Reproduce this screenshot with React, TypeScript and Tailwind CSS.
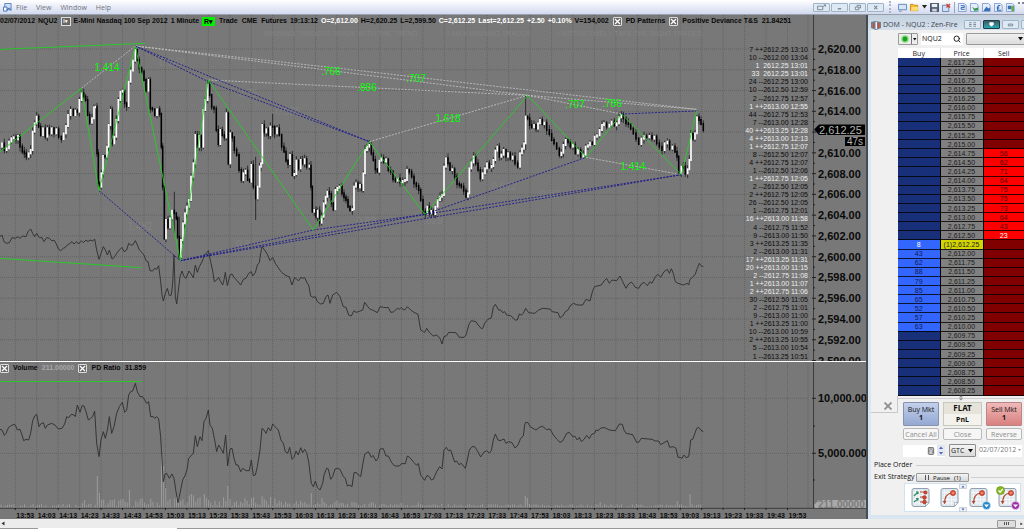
import type { ReactNode } from "react";
import { Search, Calculator } from "lucide-react";

/* Chart series are kept in thirds of a chart unit: "x:y x:y ..." */
const CLOSES = `0:440 6:430 13:450 20:445 27:425 34:415 41:412 48:418 54:408 60:440 67:455 73:460 79:470 86:460 92:450 98:395 104:370 110:350 116:380 122:405 129:385 136:410 142:385 148:400 155:385 162:400 169:388 176:410 184:417 191:400 198:378 204:345 212:330 220:345 226:332 232:335 238:300 245:280 251:290 257:300 263:345 269:368 276:355 282:322 287:320 291:460 295:550 299:560 304:520 309:468 315:470 321:440 326:375 332:330 337:430 343:410 349:360 355:300 361:275 368:272 374:310 380:318 386:245 392:212 399:182 406:150 412:180 418:205 425:215 432:240 438:272 446:240 451:325 457:328 464:345 471:328 479:342 484:440 488:560 493:715 498:660 504:682 510:655 516:632 523:640 529:655 533:710 538:770 543:720 549:670 555:640 561:620 567:600 573:530 580:490 586:405 592:440 598:408 604:440 610:330 616:300 623:255 629:285 635:322 642:326 649:390 655:432 661:390 667:405 673:412 679:340 685:490 691:400 697:412 703:450 710:465 717:510 724:540 730:520 737:512 743:540 749:545 754:495 760:560 767:595 773:560 779:500 783:490 787:375 793:397 799:388 805:405 811:380 818:380 824:400 831:385 838:405 845:440 852:455 858:482 864:492 870:465 877:525 883:522 889:482 896:505 902:480 908:490 914:478 920:500 928:497 933:560 937:635 943:630 948:650 953:632 959:668 965:650 971:610 977:590 982:575 988:582 994:610 1000:628 1006:570 1012:564 1018:560 1026:580 1032:592 1038:600 1044:620 1050:630 1057:628 1062:560 1068:550 1074:562 1080:555 1086:570 1090:520 1095:450 1101:440 1108:435 1114:460 1120:480 1126:508 1132:515 1138:482 1144:475 1151:485 1158:478 1165:510 1172:515 1179:538 1186:542 1193:536 1200:547 1208:543 1215:540 1221:510 1228:515 1235:530 1242:550 1249:558 1256:570 1262:600 1269:635 1276:642 1282:620 1288:640 1294:633 1300:642 1306:620 1313:600 1320:590 1326:585 1332:500 1338:475 1344:490 1350:510 1357:508 1364:530 1371:552 1378:555 1384:560 1391:572 1398:590 1404:580 1408:505 1414:487 1421:470 1427:490 1434:510 1441:535 1448:520 1455:505 1461:490 1468:502 1475:498 1480:480 1486:452 1492:440 1498:470 1504:464 1511:450 1518:470 1524:460 1531:476 1538:470 1545:490 1553:500 1560:460 1566:446 1572:430 1577:350 1583:355 1589:375 1595:382 1602:375 1608:386 1614:370 1620:360 1627:372 1633:368 1640:390 1648:402 1655:420 1662:430 1670:446 1678:465 1684:458 1690:435 1697:420 1704:427 1711:440 1719:434 1726:460 1734:450 1742:470 1750:464 1757:440 1764:436 1770:428 1777:432 1784:410 1791:406 1799:390 1806:375 1812:370 1820:380 1828:374 1835:365 1843:376 1850:370 1857:352 1864:345 1870:355 1878:370 1885:372 1892:386 1900:400 1908:416 1916:432 1924:416 1932:409 1940:412 1948:408 1956:416 1963:410 1970:430 1978:440 1986:450 1994:430 2002:425 2009:446 2017:440 2025:455 2031:470 2036:520 2044:500 2050:500 2056:520 2063:508 2068:480 2073:402 2079:416 2085:400 2091:352 2097:360 2103:372 2110:390`;

const DEVIANCE = `0:710 6:705 12:725 20:730 28:728 36:713 46:715 54:710 60:715 68:708 78:710 84:695 92:687 98:700 104:710 110:700 118:713 126:713 132:725 140:713 148:715 156:723 162:720 168:730 176:748 182:752 190:745 196:742 202:735 210:730 216:725 222:732 230:725 236:732 244:722 250:728 258:720 264:725 270:720 278:723 284:717 290:750 297:778 303:760 310:740 316:750 322:765 328:750 336:777 342:773 350:760 358:750 366:742 372:755 380:750 386:730 392:735 398:735 406:722 412:735 418:750 426:758 432:765 438:782 444:785 450:812 458:813 464:805 470:808 476:797 482:845 486:885 490:903 496:880 502:865 508:887 514:885 518:850 522:765 526:890 530:912 534:880 540:830 546:813 552:830 558:835 567:813 572:820 580:833 586:795 592:817 598:800 606:785 614:765 625:752 632:785 638:813 643:845 650:840 656:832 662:845 668:855 672:840 676:817 682:857 690:825 696:822 702:832 712:843 722:855 730:838 738:835 746:820 754:815 758:828 766:818 772:795 778:788 782:760 786:740 794:750 802:763 810:782 818:772 826:790 836:805 846:818 858:827 868:830 876:855 884:832 890:838 896:842 902:832 908:835 914:833 922:850 926:855 932:888 940:892 946:890 952:905 962:912 970:910 978:890 984:885 990:910 998:885 1010:877 1020:890 1030:920 1038:922 1046:945 1054:948 1062:932 1068:937 1076:935 1088:930 1094:907 1102:918 1110:928 1118:930 1132:938 1140:920 1150:922 1160:923 1165:922 1172:937 1180:936 1192:925 1198:928 1204:922 1210:930 1216:928 1222:920 1232:930 1242:937 1254:943 1262:990 1270:995 1274:997 1280:985 1288:997 1300:1008 1310:1005 1320:1015 1326:1032 1332:1010 1340:1007 1346:997 1368:998 1378:1012 1392:1012 1398:1005 1408:970 1414:962 1428:965 1432:972 1444:986 1448:985 1454:970 1460:962 1464:958 1474:953 1480:922 1486:913 1496:930 1502:930 1508:938 1514:935 1520:945 1532:947 1546:960 1552:960 1558:942 1564:945 1570:940 1577:925 1586:938 1604:940 1616:930 1628:925 1650:927 1656:935 1674:938 1680:953 1688:948 1696:935 1704:930 1710:918 1720:910 1732:915 1748:915 1758:898 1770:903 1778:872 1784:860 1804:855 1812:843 1820:835 1828:850 1836:840 1850:842 1860:828 1868:845 1878:865 1886:852 1894:846 1900:853 1906:862 1916:865 1924:852 1932:847 1942:857 1950:845 1956:850 1966:830 1974:823 1982:832 1992:815 2002:808 2008:820 2014:806 2020:820 2026:845 2034:850 2044:853 2050:855 2062:850 2066:855 2070:838 2078:832 2086:822 2092:805 2098:790 2104:798 2110:800`;

const RATIO = `0:1288 6:1290 13:1306 18:1300 26:1282 32:1278 42:1273 46:1275 52:1290 60:1288 66:1305 71:1322 78:1318 86:1320 92:1300 98:1262 104:1248 110:1243 117:1280 122:1272 130:1268 136:1285 142:1275 155:1270 165:1275 175:1287 186:1285 194:1272 200:1250 206:1253 214:1243 222:1245 226:1250 232:1215 240:1237 246:1217 252:1218 258:1235 265:1260 272:1255 278:1250 284:1233 290:1330 297:1370 303:1320 310:1295 316:1315 322:1290 328:1250 335:1300 342:1280 350:1240 358:1220 367:1207 374:1237 380:1230 386:1185 392:1175 398:1173 406:1150 412:1175 420:1190 428:1190 434:1200 440:1210 446:1205 452:1250 460:1250 464:1255 470:1250 476:1257 482:1310 486:1380 490:1445 495:1422 500:1420 508:1435 516:1422 522:1435 528:1475 534:1508 540:1480 548:1440 556:1425 562:1405 566:1375 580:1360 586:1307 592:1340 600:1310 606:1322 612:1265 618:1255 625:1230 630:1275 637:1285 643:1315 650:1355 656:1335 662:1345 670:1360 677:1305 683:1398 690:1347 696:1345 702:1375 708:1395 714:1395 722:1415 728:1405 738:1412 748:1412 754:1380 760:1427 766:1425 772:1400 780:1350 786:1285 792:1290 798:1300 805:1283 812:1293 818:1272 825:1280 835:1290 843:1320 850:1330 856:1355 863:1360 869:1342 876:1378 882:1372 888:1353 895:1365 902:1343 908:1358 914:1348 920:1358 926:1385 934:1450 940:1460 946:1443 952:1462 960:1470 968:1450 972:1425 980:1405 985:1407 992:1438 998:1430 1005:1407 1012:1405 1020:1408 1030:1430 1036:1435 1042:1458 1050:1455 1056:1460 1062:1418 1070:1418 1075:1425 1082:1430 1088:1395 1094:1363 1105:1355 1114:1372 1119:1366 1128:1383 1134:1375 1140:1347 1150:1346 1158:1368 1165:1368 1175:1388 1184:1398 1198:1398 1204:1391 1216:1391 1222:1368 1230:1373 1242:1388 1250:1396 1255:1390 1262:1425 1274:1441 1281:1426 1288:1430 1294:1440 1300:1438 1310:1415 1319:1400 1326:1407 1332:1350 1339:1342 1345:1352 1352:1350 1364:1386 1370:1383 1377:1394 1384:1390 1396:1405 1402:1380 1408:1350 1416:1340 1424:1340 1432:1352 1442:1371 1452:1356 1460:1352 1468:1359 1474:1352 1480:1320 1486:1302 1494:1320 1500:1322 1512:1317 1518:1330 1526:1325 1536:1328 1545:1344 1554:1335 1562:1315 1570:1308 1574:1275 1577:1267 1584:1268 1590:1280 1608:1290 1618:1282 1628:1279 1640:1289 1650:1287 1660:1305 1670:1317 1680:1327 1688:1323 1700:1300 1708:1297 1718:1310 1724:1308 1732:1320 1738:1312 1744:1325 1752:1318 1760:1306 1768:1316 1775:1303 1784:1300 1788:1290 1795:1292 1802:1284 1814:1283 1828:1290 1846:1292 1858:1272 1867:1273 1872:1290 1878:1300 1898:1304 1910:1327 1916:1327 1924:1315 1956:1318 1966:1323 1976:1323 1982:1334 2002:1322 2009:1342 2020:1340 2028:1345 2034:1372 2040:1372 2046:1375 2052:1365 2058:1373 2066:1370 2070:1340 2072:1320 2078:1318 2084:1302 2090:1285 2096:1282 2102:1290 2110:1295`;

type Pt = [number, number];
const parse = (s: string): Pt[] =>
  s.split(" ").map((p) => {
    const [x, y] = p.split(":");
    return [Number(x) / 3, Number(y) / 3];
  });
const toPoints = (pts: Pt[]) => pts.map((p) => p.join(",")).join(" ");
const noise = (i: number) => {
  const v = Math.sin(i * 12.9898) * 43758.5453;
  return v - Math.floor(v);
};

const closes = parse(CLOSES);
const WICKS: Record<number, [number, number]> = { 1577: [286, 450], 767: [470, 660], 523: [575, 700], 406: [140, 190], 538: [650, 780], 623: [240, 310], 818: [342, 410] };
const candles = closes.slice(1).map(([x, y], i) => {
  const open = closes[i][1];
  const top = Math.min(open, y) - 1;
  const bottom = Math.max(open, y) + 1;
  const wick = WICKS[Math.round(x * 3)];
  return {
    x,
    up: y < open,
    top,
    bottom,
    high: wick ? wick[0] / 3 : top - noise(i) * 4,
    low: wick ? wick[1] / 3 : bottom + noise(i + 500) * 4,
  };
});

const SPIKES: Record<number, number> = { 15: 4, 39: 8, 45: 32, 46: 15, 60: 18, 75: 60, 76: 42, 77: 20, 89: 14, 95: 14, 106: 22, 122: 12, 145: 15, 150: 10, 245: 12, 246: 10, 280: 6, 316: 7, 322: 14 };
const volumes = Array.from({ length: 328 }, (_, i) => {
  const base = i < 38 ? 3 : i < 45 ? 4 : i < 78 ? 9 : i < 95 ? 12 : i < 132 ? 10 : i < 160 ? 7 : i < 200 ? 5 : 3;
  return { x: i * 2.14 + 1, h: SPIKES[i] ?? 1 + noise(i + 90) * base };
});

const prices = Array.from({ length: 16 }, (_, i) => ({ y: 49 + i * 20.77, label: `2,${620 - i * 2}.00` }));
const times = Array.from({ length: 37 }, (_, i) => {
  const m = 13 * 60 + 53 + i * 10;
  return { x: 15.3 + i * 21.45, label: `${Math.floor(m / 60)}:${String(m % 60).padStart(2, "0")}` };
});

const SWINGS = "0,455 244,265 297,572 406,138 541,782 625,240 940,690 1108,425 1275,643 1583,286 1758,472 1865,342 2044,524 2090,333";
const RATIO_LINES = ["244,265 406,138", "406,138 1000,203 2090,328", "406,138 1583,286", "625,240 1583,286", "1108,425 1583,286", "1583,286 1865,342", "1583,286 2090,328", "1758,472 2044,524"];
const TREND_LINES = ["406,138 1108,425", "406,138 625,245 1108,425", "297,572 541,782", "541,782 940,690 1275,643 1758,472", "541,782 1275,643 2044,524", "541,782 2044,524", "1865,342 2090,333"];
const GREEN_LABELS: [string, number, number][] = [["1.414", 107, 71], [".766", 331, 75], [".886", 367, 91], [".707", 416, 82], ["1.618", 448, 122], [".707", 575, 108], [".786", 612, 107], ["1.414", 633, 170]];
const FAINT_LABELS: [string, number, number][] = [["0.642", 172, 66], ["0.75", 248, 97], ["0.586", 288, 115], ["1.482", 140, 230], ["0.8", 243, 248], ["0.512", 504, 190], ["0.97", 550, 198], ["0.82", 366, 225], [".829", 433, 224]];

function GridLines({ top, bottom, ys }: { top: number; bottom: number; ys: number[] }) {
  return (
    <g stroke="#636363" strokeDasharray="1 1">
      {times.map((t) => (
        <line key={t.label} x1={t.x} x2={t.x} y1={top} y2={bottom} />
      ))}
      <line x1="808" x2="808" y1={top} y2={bottom} />
      {ys.map((y) => (
        <line key={y} x1="0" x2="808" y1={y} y2={y} />
      ))}
    </g>
  );
}

function PriceChart() {
  return (
    <svg viewBox="0 15 866 346" className="block w-full" role="img" aria-label="NQU2 price">
      <GridLines top={15} bottom={361} ys={prices.map((p) => p.y)} />
      <g fill="#838383" fontFamily="Liberation Sans, sans-serif" fontSize="7">
        <text x="264" y="36">WINNING TRADERS TRADE WITH THE TREND</text>
        <text x="447" y="36">I AM A WINNING TRADER</text>
        <text x="557" y="36">I INSTINCTIVELY TAKE THE RIGHT TRADES</text>
      </g>
      <g fill="#828282" fontFamily="Liberation Sans, sans-serif" fontSize="10" textAnchor="middle">
        {FAINT_LABELS.map(([t, x, y]) => (
          <text key={t + x} x={x} y={y}>{t}</text>
        ))}
      </g>
      <polyline points={toPoints(parse(DEVIANCE))} fill="none" stroke="#2e2e2e" strokeWidth="0.9" />
      {candles.map((c) => (
        <line key={c.x} x1={c.x} x2={c.x} y1={c.high} y2={c.low} stroke="#0c0c0c" strokeWidth="0.7" />
      ))}
      {candles.map((c) => (
        <rect key={c.x} x={c.x - (c.up ? 0.85 : 0.75)} y={c.top} width={c.up ? 1.7 : 1.5} height={c.bottom - c.top} fill={c.up ? "#fff" : "#000"} />
      ))}
      <g transform="scale(0.33333)" fill="none" strokeWidth="2.4">
        <g stroke="#c6c6c6" strokeDasharray="6 4">
          {RATIO_LINES.map((p) => <polyline key={p} points={p} />)}
        </g>
        <g stroke="#1c1c8c" strokeDasharray="6 4" strokeWidth="2.8">
          {TREND_LINES.map((p) => <polyline key={p} points={p} />)}
        </g>
        <g stroke="#1fd41f" strokeWidth="2.6">
          <polyline points={SWINGS} />
          <polyline points="0,148 435,130" />
          <polyline points="0,775 425,803" />
        </g>
      </g>
      <g fill="#00ff00" fontFamily="Liberation Sans, sans-serif" fontSize="10" textAnchor="middle">
        {GREEN_LABELS.map(([t, x, y]) => (
          <text key={t + x} x={x} y={y}>{t}</text>
        ))}
      </g>
      <line x1="813.5" x2="813.5" y1="15" y2="361" stroke="#3c3c3c" />
      <g fill="#0a0a0a" fontFamily="Liberation Sans, sans-serif" fontSize="11" fontWeight="700">
        {prices.map((p, i) => (
          <g key={p.label}>
            <path d={`M812 ${p.y}h4M813 ${p.y + 10.4}h2`} stroke="#222" />
            {i !== 4 && <text x="818" y={p.y + 4}>{p.label}</text>}
          </g>
        ))}
      </g>
      <path d="M814 129.500l5-5h46v10.500h-46z" fill="#000" />
      <rect x="845" y="137" width="20" height="9" fill="#000" />
      <g fill="#b4b4b4" fontFamily="Liberation Sans, sans-serif">
        <text x="819" y="133.500" fontSize="11">2,612.25</text>
        <text x="847" y="145" fontSize="10">47s</text>
      </g>
    </svg>
  );
}

function VolumeChart() {
  return (
    <svg viewBox="0 362 866 157" className="block w-full" role="img" aria-label="Volume and PD ratio">
      <GridLines top={363} bottom={508} ys={[398.3, 453.3]} />
      {volumes.map((v) => (
        <line key={v.x} x1={v.x} x2={v.x} y1={508 - v.h} y2="508" stroke="#9b9b9b" strokeWidth="1" />
      ))}
      <polyline points={toPoints(parse(RATIO))} fill="none" stroke="#2e2e2e" strokeWidth="0.9" />
      <path d="M0 381.500h141.500" stroke="#1fd41f" strokeWidth="0.9" />
      <path d="M0 508.300h866M813.500 362v147" stroke="#3c3c3c" />
      <path d="M812 398.300h4M812 453.300h4M813 426h2M813 480h2" stroke="#222" />
      <g fill="#0a0a0a" fontFamily="Liberation Sans, sans-serif" fontWeight="700">
        {times.map((t) => (
          <g key={t.label}>
            <path d={`M${t.x} 508v2`} stroke="#222" />
            <text x={t.x + 1} y="517.500" fontSize="7">{t.label}</text>
          </g>
        ))}
        <text x="818" y="402.300" fontSize="11">10,000.00</text>
        <text x="818" y="457.300" fontSize="11">5,000.000</text>
      </g>
      <path d="M814 505l5-5h47v8h-51z" fill="#a9a9a9" />
      <text x="818" y="508" fontSize="10" fontWeight="700" fontFamily="Liberation Sans, sans-serif" fill="#7c7c7c">211.00000</text>
    </svg>
  );
}

const DARK = "text-[#0a0a0a]";
const LIGHT = "text-white";

function CloseBox({ label }: { label: string }) {
  return (
    <button aria-label={label} className="flex size-[9px] shrink-0 items-center justify-center rounded-[1px] border border-[#ddd] bg-[#666]">
      <svg viewBox="0 0 7 7" className="size-[7px]"><path d="M1 1l5 5M6 1l-5 5" stroke="#fff" strokeWidth="1.3" /></svg>
    </button>
  );
}

const TAPE = `7 ++2612.25 13:10|10 --2612.00 13:04|*1  2612.25 13:01|*33  2612.25 13:01|24 --2612.25 13:00|10 --2612.50 12:59|2 --2612.75 12:57|*1 ++2613.00 12:55|44 --2612.75 12:53|7 --2613.00 12:28|*40 ++2613.25 12:28|*4 ++2613.00 12:13|*1 ++2612.75 12:07|8 --2612.50 12:07|4 ++2612.75 12:07|1 --2612.50 12:06|*1 ++2612.75 12:05|2 --2612.50 12:05|2 ++2612.75 12:05|26 --2612.50 12:05|1 --2612.75 12:01|*16 ++2613.00 11:58|4 --2612.75 11:52|9 --2613.00 11:50|3 ++2613.25 11:35|2 --2613.00 11:31|*17 ++2613.25 11:31|*20 ++2613.00 11:15|*2 --2612.75 11:08|*1 ++2613.00 11:07|*2 ++2612.75 11:06|30 --2612.50 11:05|2 --2612.75 11:01|9 --2613.00 11:00|1 ++2613.25 11:00|10 --2613.00 10:59|2 ++2613.25 10:55|5 --2613.00 10:54|1 --2613.25 10:51`.split("|");

function Charts() {
  return (
    <main className="min-w-0 flex-1 overflow-hidden bg-[#787878] font-['Liberation_Sans',sans-serif]">
      <section className="relative">
        <PriceChart />
        <header className="absolute inset-x-0 top-0 flex h-3 items-center gap-1 overflow-hidden text-[7px] font-bold whitespace-nowrap">
          <div className="flex items-center gap-[3px]">
            <span className={DARK}>02/07/2012</span>
            <span className={DARK}>NQU2</span>
            <button aria-label="Instrument" className="flex h-[9px] w-[10px] items-center justify-center border border-[#ddd] bg-[#666] text-[5px] leading-none text-white">I▾</button>
            <span className={DARK}>E-Mini Nasdaq 100 Sep 2012</span>
            <span className={DARK}>1 Minute</span>
            <button className="flex h-[9px] w-[13px] items-center justify-center bg-[#00f000] leading-none text-black">R▾</button>
          </div>
          <span className={DARK}>Trade</span>
          <span className={DARK}>CME</span>
          <div className="flex items-center gap-[3px]">
            <span className={DARK}>Futures</span>
            <span className={DARK}>19:13:12</span>
            <span className={LIGHT}>O=2,612.00</span>
            <span className={DARK}>H=2,620.25</span>
            <span className={DARK}>L=2,599.50</span>
            <span className={LIGHT}>C=2,612.25</span>
            <span className={LIGHT}>Last=2,612.25</span>
            <span className={LIGHT}>+2.50</span>
            <span className={LIGHT}>+0.10%</span>
            <span className={DARK}>V=154,002</span>
          </div>
          <CloseBox label="Remove PD Patterns" />
          <span className={DARK}>PD Patterns</span>
          <CloseBox label="Remove Positive Deviance" />
          <span className={DARK}>Positive Deviance T&amp;S</span>
          <span className={DARK}>21.84251</span>
        </header>
        <ol className="absolute top-[9%] right-[58px] bottom-0 flex flex-col justify-between text-right text-[7px] leading-[8px] whitespace-pre">
          {TAPE.map((t, i) => (
            <li key={i} className={t[0] === "*" ? "text-[#eee]" : "text-[#0c0c0c]"}>{t.replace("*", "")}</li>
          ))}
        </ol>
      </section>
      <section className="relative border-t border-white">
        <VolumeChart />
        <header className="absolute inset-x-0 top-0 flex h-3 items-center gap-1 text-[7px] font-bold whitespace-nowrap">
          <CloseBox label="Remove Volume" />
          <span className={DARK}>Volume</span>
          <span className="text-[#a8a8a8]">211.00000</span>
          <CloseBox label="Remove PD Ratio" />
          <span className={DARK}>PD Ratio</span>
          <span className={DARK}>31.859</span>
        </header>
      </section>
    </main>
  );
}

function WinButton({ label, children, active }: { label: string; children: ReactNode; active?: boolean }) {
  return (
    <button
      aria-label={label}
      className={`flex h-[9px] w-[17px] shrink-0 items-center justify-center rounded-[1px] border ${active ? "border-[#1e3c46] bg-linear-to-b from-[#3c5a66] to-[#1fa9b0]" : "border-[#9fb4c6] bg-[#dfe9f3]"}`}
    >
      <svg viewBox="0 0 12 8" className="h-[7px] w-[11px]" fill="none" stroke={active ? "#fff" : "#71808e"}>{children}</svg>
    </button>
  );
}

function ToolIcon({ label, children }: { label: string; children: ReactNode }) {
  return (
    <button aria-label={label} className="size-[9px] shrink-0">
      <svg viewBox="0 0 10 10" className="size-[9px]">{children}</svg>
    </button>
  );
}

const SHEET = <path d="M.5 .5h6.500l2 2v7h-8.500z" fill="#e6effb" stroke="#7d9bd0" />;

function TopBar() {
  return (
    <header className="flex h-[15px] items-center overflow-hidden border-b border-[#98a0b0] bg-linear-to-b from-white via-[#e8ecf8] to-[#d3daee] font-['Open_Sans',sans-serif]">
      <div className="flex min-w-0 flex-1 items-center pl-[3px]">
        <svg viewBox="0 0 10 10" className="size-[9px]">
          <path d="M2 .5h7v7h-7z" fill="#cfe0f6" stroke="#4e7cbc" />
          <path d="M.5 4.500h4v4.500h-4z" fill="#fff" stroke="#3569b5" />
          <path d="M4 7.500l3-2 2 3" fill="none" stroke="#2e67b0" />
        </svg>
        <nav className="flex gap-[9px] pl-1 text-[7px] leading-none text-[#6d717a]">
          <button>File</button>
          <button>View</button>
          <button>Window</button>
          <button>Help</button>
        </nav>
      </div>
      <div className="flex w-[211px] shrink-0 items-center gap-px">
        <WinButton label="Pop out"><path d="M1.500 2.500h6v4h-6zM8 3l2.500-2M8.500 1h2v2" /></WinButton>
        <WinButton label="Minimize"><path d="M4 5.500h4" strokeWidth="1.500" /></WinButton>
        <WinButton label="Restore"><path d="M3.500 3.500h4v3h-4zM5.500 3v-1.500h4v3h-2" /></WinButton>
        <WinButton label="Close"><path d="M4.500 2l3.500 4M8 2l-3.500 4" strokeWidth="1.300" /></WinButton>
        <span className="ml-1 h-3 border-l-2 border-dotted border-[#aab4cc]" />
        <div className="ml-1.5 flex items-center gap-[3px]">
          <ToolIcon label="New window"><path d="M.5 1.500h9v6h-9z" fill="#d5e6fa" stroke="#5b82b8" /><path d="M1 9h3" stroke="#5b82b8" /></ToolIcon>
          <ToolIcon label="Open"><path d="M.5 8.500v-7h3l1 1h4v6z" fill="#f4bf3a" stroke="#c98a12" /><path d="M2 4.500h7.500l-1 4h-7.500z" fill="#ffdc73" /></ToolIcon>
          <svg viewBox="0 0 5 4" className="w-[5px]"><path d="M0 0h5l-2.500 3.500z" fill="#222" /></svg>
          <ToolIcon label="Save"><path d="M.5 .5h9v9h-9z" fill="#5a6578" stroke="#414a59" /><path d="M2 1h6v3.500h-6z" fill="#e8eef6" /><path d="M2.500 6.500h5v3h-5z" fill="#cfd6e0" /></ToolIcon>
          <ToolIcon label="Close workspace"><path d="M.5 2.500h7v7h-7z" fill="#cfe0f6" stroke="#5b82b8" /><path d="M5 1l4 4M9 1l-4 4" stroke="#d0392b" strokeWidth="1.400" /></ToolIcon>
          <span className="h-[11px] w-px bg-[#98a4c0]" />
          <ToolIcon label="Account">{SHEET}<path d="M3 3h4v2h-3.500v2h4" fill="none" stroke="#275fb0" /></ToolIcon>
          <ToolIcon label="Chart">{SHEET}<path d="M2 4l3 2 4-1v3l-4 1z" fill="#389a47" /></ToolIcon>
          <ToolIcon label="Strategy">{SHEET}<path d="M2 8l3-4 2 2 2-1v4h-7z" fill="#3c6fb6" /></ToolIcon>
          <ToolIcon label="Currency">{SHEET}<path d="M7 3c-3-1-3 1-3 5h4M3 5.500h3" fill="none" stroke="#275fb0" strokeWidth="1.200" /></ToolIcon>
          <ToolIcon label="Report">{SHEET}<path d="M2 3h4v4h-4z" fill="#3c6fb6" /><path d="M6 3h3v6h-3z" fill="#61ad4b" /></ToolIcon>
          <span className="h-[9px] w-1.5 shrink-0 self-start border-t-2 border-dotted border-[#7d8798]" />
        </div>
      </div>
    </header>
  );
}

const BIDS = [8, 43, 62, 88, 79, 85, 65, 52, 57, 63];
const ASKS = [56, 62, 71, 64, 75, 75, 73, 64, 43, 23];

function Ladder() {
  return (
    <table className="h-[348px] w-full table-fixed border-collapse text-center text-[7px] leading-[7px]">
      <thead>
        <tr className="h-[10px] bg-white font-['Open_Sans',sans-serif] text-[#222]">
          <th className="w-[42px] p-0 font-normal">Buy</th>
          <th className="w-[43px] border-x border-[#ddd] p-0 font-normal">Price</th>
          <th className="p-0 font-normal">Sell</th>
        </tr>
      </thead>
      <tbody className="font-['Liberation_Sans',sans-serif]">
        {Array.from({ length: 37 }, (_, i) => {
          const price = 2617.25 - i * 0.25;
          const bid = BIDS[i - 20];
          const ask = ASKS[i - 10];
          const last = i === 20;
          return (
            <tr key={price} className="border-b border-black/80">
              <td className={`p-0 ${bid ? "bg-[#3366ff]" : "bg-[#18307a]"} ${last ? "text-white" : "text-[#0c1c50]"}`}>{bid}</td>
              <td className={`border-x border-black p-0 ${last ? "bg-[#d4d400] text-[#222]" : "bg-[#808080] text-[#1c1c1c]"}`}>
                {last ? "(1)" : ""}2,{(price - 2000).toFixed(2)}
              </td>
              <td className={`p-0 ${ask ? "bg-[#ff0000]" : "bg-[#800000]"} ${i === 19 ? "text-white" : "text-[#5a0000]"}`}>{ask}</td>
            </tr>
          );
        })}
      </tbody>
    </table>
  );
}

function StrategyIcon({ label, badge, check, multi }: { label: string; badge?: string; check?: boolean; multi?: boolean }) {
  return (
    <button aria-label={label} className="size-[24px] shrink-0">
      <svg viewBox="0 0 24 24" className="size-[24px]">
        <path d="M5 2.500h13q2 0 2 2v12l-3.500 4h-11.500q-2 0-2-2v-14q0-2 2-2z" fill="#dfe6ec" stroke="#8fa0ae" />
        <path d="M6.500 4v15M10 4v15M13.500 4v15M17 4v13M4 6.500h15M4 10h15M4 13.500h15M4 17h13" stroke="#f7fafc" strokeWidth="0.800" />
        <path d="M20 16.500h-3.500v4z" fill="#fff" stroke="#8fa0ae" strokeWidth="0.700" />
        {multi ? (
          <g fill="none" strokeWidth="1.200">
            <path d="M5 10l4-4M7 6h2v2M5 16l4-3M7 12.500h2v2" stroke="#2f8f5a" />
            <path d="M11 6h5M11 11h3M11 16h3" stroke="#a8462f" />
            <g fill="#d4452f" stroke="#8d2a1b" strokeWidth="0.500"><circle cx="16.500" cy="6.500" r="1.700" /><circle cx="15.500" cy="11.500" r="1.900" /><circle cx="15.500" cy="16" r="1.900" /></g>
          </g>
        ) : (
          <g>
            <path d="M6.500 17.500c0-6 2-10 7.500-10.500" fill="none" stroke="#b1442e" strokeWidth="1.200" />
            <path d="M4.800 15l1.700 3 1.900-3z" fill="#b1442e" />
            <circle cx="15" cy="7" r="2.600" fill="#e0523a" stroke="#a12f1c" strokeWidth="0.600" />
            <path d="M13.800 7h2.400" stroke="#ffd9cf" strokeWidth="0.800" />
          </g>
        )}
        {badge && (
          <g>
            <circle cx="19.500" cy="19.500" r="4" fill={badge} stroke="#e9eef2" strokeWidth="0.600" />
            <path d="M17 18.500h5l-2.500 3z" fill="#fff" />
          </g>
        )}
        {check && (
          <g>
            <circle cx="4.500" cy="4.500" r="4" fill="#86b81f" stroke="#5d8a12" strokeWidth="0.600" />
            <path d="M2.500 4.500l1.600 1.700 2.700-3.400" fill="none" stroke="#fff" strokeWidth="1.300" />
          </g>
        )}
      </svg>
    </button>
  );
}

const SMALL_BUTTON = "h-3 rounded-[2px] border border-[#b9b9b9] bg-[#f6f6f6] text-[7px] leading-none whitespace-nowrap text-[#8d8d8d]";

function OrderPanel() {
  return (
    <aside className="flex w-[158px] shrink-0 flex-col overflow-hidden border-l-2 border-[#454b52] bg-[#d9e5f1] font-['Open_Sans',sans-serif] text-[7px] text-[#111]">
      <div className="flex h-[15px] shrink-0 items-center gap-0.5 bg-linear-to-b from-[#c3d1df] to-[#d5e0eb] pt-1 pl-[3px]">
        <svg viewBox="0 0 10 10" className="size-[10px] shrink-0">
          <path d="M0 2l4-1 6 1v6l-5 2-5-2z" fill="#6f7f8f" /><path d="M2 3h1.500v5h-1.500zM7 3h1.500v5h-1.500z" fill="#d24a35" /><path d="M4.500 2h1.500v7h-1.500z" fill="#f2f2f2" />
        </svg>
        <h2 className="w-[79px] shrink-0 leading-none whitespace-nowrap text-[#39434e]">DOM - NQU2 : Zen-Fire</h2>
        <WinButton label="Link windows"><path d="M2 2h3M7 2h3M2 4h3M7 4h3M2 6h3M7 6h3" /></WinButton>
        <WinButton label="Pin" active><path d="M4 2h4v2l-2 2-2-2z" fill="#fff" /></WinButton>
        <WinButton label="Minimize"><path d="M3.500 3.500h5v2h-5z" /></WinButton>
        <WinButton label="Restore"><path d="M3.500 2.500h5v4h-5z" /></WinButton>
      </div>
      <div className="ml-[3px] flex flex-1 flex-col bg-[#f0f0f0]">
        <div className="flex h-[18px] items-center gap-[3px] pl-[27px]">
          <button aria-label="Connection" className="flex h-3 w-5 shrink-0 items-center rounded-[1px] border border-[#999] bg-[#eee]">
            <svg viewBox="0 0 18 10" className="h-[10px] w-[18px]"><circle cx="6" cy="5" r="3.800" fill="#8bdc7f" /><circle cx="6" cy="5" r="2.400" fill="#15a422" /><path d="M12.500 0v10" stroke="#777" /><path d="M14 4h3.500l-1.700 2.500z" fill="#111" /></svg>
          </button>
          <div className="flex h-3 w-[42px] shrink-0 items-center bg-white pr-0.5">
            <input aria-label="Instrument" defaultValue="NQU2" className="w-0 min-w-0 flex-1 bg-transparent pl-px outline-none" />
            <Search className="size-[8px] text-[#222]" strokeWidth={3} />
          </div>
          <div className="flex h-3 w-[62px] shrink-0 items-center rounded-[1px] border border-[#999] bg-linear-to-b from-[#f0f0f0] to-[#dcdcdc]">
            <select aria-label="Account" className="h-full w-full appearance-none bg-transparent"><option /></select>
            <svg viewBox="0 0 5 4" className="mr-1 w-[5px] shrink-0"><path d="M0 0h5l-2.500 3.500z" fill="#111" /></svg>
          </div>
        </div>
        <div className="pl-[27px]"><Ladder /></div>
        <div className="flex">
          <div className="flex h-[17px] w-[27px] justify-end border-r border-b border-[#c8c8c8] pt-[6px] pr-[5px]">
            <button aria-label="Close panel" className="size-[8px]"><svg viewBox="0 0 8 8"><path d="M.5 .5l7 7M7.500 .5l-7 7" stroke="#8e8e8e" strokeWidth="1.800" /></svg></button>
          </div>
          <div className="min-w-0 flex-1 pt-0.5">
            <div className="flex h-px justify-center bg-[#cfcfcf]">
              <svg viewBox="0 0 4 6" className="-mt-[3px] h-[6px] w-[4px]"><path d="M0 2.500l2-2 2 2zM0 3.500l2 2 2-2z" fill="#888" /></svg>
            </div>
            <div className="mt-[3px] grid grid-cols-[36px_39px_36px] gap-x-1 gap-y-0.5 pl-[5px]">
              <button className="h-6 rounded-[1px] border border-[#8593ae] bg-linear-to-b from-[#c3d0ec] to-[#94a8d2] leading-[8px]">Buy Mkt<br /><b>1</b></button>
              <div className="h-6 border border-[#c9c9bb] bg-[#f3f2ec] text-center font-['Noto_Sans',sans-serif] font-bold">
                <div className="h-[11px] bg-[#e6e4da] text-[8px] leading-[10px]">FLAT</div>
                <div className="text-[7px] leading-[11px]">PnL</div>
              </div>
              <button className="h-6 rounded-[1px] border border-[#b98585] bg-linear-to-b from-[#efb9b9] to-[#d98080] leading-[8px]">Sell Mkt<br /><b>1</b></button>
              <button className={SMALL_BUTTON}>Cancel All</button>
              <button className={SMALL_BUTTON}>Close</button>
              <button className={SMALL_BUTTON}>Reverse</button>
            </div>
            <div className="mt-1 flex h-[13px] items-center pl-[5px]">
              <div className="flex h-3 w-[42px] shrink-0 items-center bg-white">
                <input aria-label="Quantity" className="w-0 min-w-0 flex-1 outline-none" />
                <Calculator className="size-[8px] text-[#666]" strokeWidth={3} />
                <svg viewBox="0 0 8 11" className="ml-0.5 h-[11px] w-[8px]"><path d="M0 0h8v11h-8z" fill="#e3e7f0" /><path d="M4 1.500l2 2.500h-4zM4 9.500l2-2.500h-4z" fill="#4a62c0" /></svg>
              </div>
              <div className="ml-1 flex h-[13px] w-[27px] shrink-0 items-center rounded-[1px] border border-[#8c8c8c] bg-linear-to-b from-[#f5f5f5] to-[#d9d9d9]">
                <select aria-label="Time in force" className="h-full w-0 min-w-0 flex-1 appearance-none bg-transparent pl-px leading-none"><option>GTC</option></select>
                <svg viewBox="0 0 5 4" className="mr-0.5 w-[5px] shrink-0"><path d="M0 0h5l-2.500 3.500z" fill="#111" /></svg>
              </div>
              <div className="ml-[3px] flex h-3 w-[43px] shrink-0 items-center bg-white">
                <input aria-label="Good till date" defaultValue="02/07/2012" className="w-0 min-w-0 flex-1 text-[#777] outline-none" />
                <svg viewBox="0 0 5 4" className="mr-px w-[3px] shrink-0"><path d="M0 0h5l-2.500 3.500z" fill="#999" /></svg>
              </div>
            </div>
          </div>
        </div>
        <div className="mt-[3px] flex h-[10px] items-center gap-1 pl-[3px] whitespace-nowrap after:h-px after:flex-1 after:bg-[#cfcfcf]">Place Order</div>
        <div className="mt-0.5 flex h-[11px] items-center gap-0.5 pl-[3px] whitespace-nowrap after:h-px after:flex-1 after:bg-[#cfcfcf]">
          Exit Strategy
          <button className="flex h-[9px] w-[53px] items-center justify-center gap-1 rounded-[1px] border border-[#999] bg-linear-to-b from-[#f4f4f4] to-[#d8d8d8] text-[6px] leading-none">
            <span className="h-[5px] w-[4px] border-x border-[#555]" />Pause<span>(1)</span>
          </button>
        </div>
        <div className="relative ml-[33px] mr-[3px] flex h-[29px] items-center justify-between border border-[#d3e2f0] bg-white pr-0 pl-1">
          <StrategyIcon label="Multi target" multi />
          <StrategyIcon label="Stop" />
          <StrategyIcon label="Stop, save" badge="#1f86c8" />
          <StrategyIcon label="Stop, active" badge="#a02aa8" check />
          <svg viewBox="0 0 8 28" className="absolute inset-y-0 left-1/2 h-[28px] w-[8px] -translate-x-1/2">
            <path d="M.5 .5h7v4h-7zM.5 23.500h7v4h-7z" fill="#eef1f6" stroke="#b9c0cc" strokeWidth="0.700" /><path d="M2.500 3.500l1.500-2 1.500 2zM2.500 24.500l1.500 2 1.500-2z" fill="#3f5fb5" />
          </svg>
        </div>
      </div>
      <div className="h-1 shrink-0 bg-[#d9e5f1]" />
    </aside>
  );
}

export default function App() {
  return (
    <div className="flex flex-col overflow-hidden bg-[#ececec]">
      <TopBar />
      <div className="flex">
        <Charts />
        <OrderPanel />
      </div>
      <footer className="flex h-[9px] items-center justify-between bg-[#ececec] px-px">
        <button aria-label="Scroll left" className="w-[4px]"><svg viewBox="0 0 4 5"><path d="M3.500 .5v4l-3-2z" fill="#333" /></svg></button>
        <div className="flex items-center gap-1">
          <div className="flex h-[8px] w-[19px] items-center justify-center gap-px rounded-[1px] border border-[#999] bg-[#ddd]">
            <span className="h-[3px] w-px bg-[#555]" />
            <span className="h-[3px] w-px bg-[#555]" />
            <span className="h-[3px] w-px bg-[#555]" />
          </div>
          <button aria-label="Scroll right" className="w-[3px]"><svg viewBox="0 0 4 5"><path d="M.5 .5v4l3-2z" fill="#333" /></svg></button>
        </div>
      </footer>
      <div className="flex h-px">
        <span className="w-[38px] bg-[#999]" />
        <span className="w-[139px] bg-white" />
        <span className="flex-1 bg-[#999]" />
      </div>
    </div>
  );
}
